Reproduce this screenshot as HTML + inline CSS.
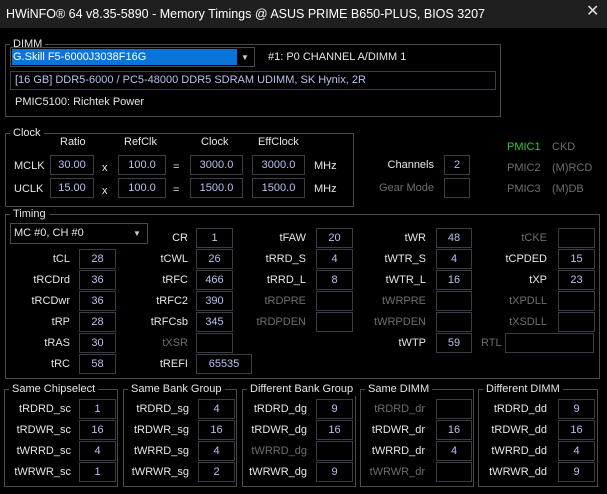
<!DOCTYPE html><html><head><meta charset="utf-8"><style>
*{margin:0;padding:0;box-sizing:border-box}
body{width:607px;height:494px;background:#000;font-family:"Liberation Sans",sans-serif;font-size:11px;color:#e6e6e6;position:relative;overflow:hidden}
.a{position:absolute;white-space:nowrap;line-height:14px}
.g{position:absolute;border:1px solid #4a4a4a}
.gl{position:absolute;background:#000;padding:0 3px;line-height:14px;color:#e6e6e6}
.b{position:absolute;border:1px solid #3c3c48;color:#b8c0f0;text-align:center;line-height:19px;height:20px}
.d{color:#6e6e6e}
.r{text-align:right}
</style></head><body>
<div class="a" style="left:0;top:0;width:607px;height:28px;background:#1f1f1f"></div>
<div class="a" style="left:6px;top:7px;font-size:12.5px;color:#fff">HWiNFO® 64 v8.35-5890 - Memory Timings @ ASUS PRIME B650-PLUS, BIOS 3207</div>
<div class="a" style="left:586px;top:5px;font-size:16px;color:#ddd">✕</div>
<div id="c"></div>
<script>
var h='';
function A(x,y,t,cls,st){h+='<div class="a '+(cls||'')+'" style="left:'+x+'px;top:'+y+'px;'+(st||'')+'">'+t+'</div>';}
function R(xe,y,t,d){h+='<div class="a r'+(d?' d':'')+'" style="right:'+(607-xe)+'px;top:'+(y+3)+'px">'+t+'</div>';}
function B(x1,x2,y,t){h+='<div class="b" style="left:'+x1+'px;top:'+y+'px;width:'+(x2-x1)+'px">'+(t||'')+'</div>';}
function G(x1,y1,x2,y2,l){h+='<div class="g" style="left:'+x1+'px;top:'+y1+'px;width:'+(x2-x1)+'px;height:'+(y2-y1)+'px"></div><div class="gl" style="left:'+(x1+5)+'px;top:'+(y1-7)+'px">'+l+'</div>';}
G(5,44,501,117,'DIMM');
h+='<div class="a" style="left:10px;top:47px;width:245px;height:20px;border:1px solid #4a4a4a"></div>';
h+='<div class="a" style="left:12px;top:49px;width:225px;height:16px;background:#0a74d8;color:#fff;padding-left:1px;line-height:16px">G.Skill F5-6000J3038F16G</div>';
A(241,51,'▼','','font-size:8px;color:#ccc');
A(268,50,'#1: P0 CHANNEL A/DIMM 1');
h+='<div class="a" style="left:10px;top:71px;width:486px;height:19px;border:1px solid #3c3c48;color:#b8c0f0;padding-left:4px;line-height:17px">[16 GB] DDR5-6000 / PC5-48000 DDR5 SDRAM UDIMM, SK Hynix, 2R</div>';
A(15,95,'PMIC5100: Richtek Power');
G(5,133,354,207,'Clock');
A(60,135,'Ratio');A(124,135,'RefClk');A(201,135,'Clock');A(258,135,'EffClock');
[[155,'MCLK','30.00','100.0','3000.0','3000.0'],[178,'UCLK','15.00','100.0','1500.0','1500.0']].forEach(function(r){var y=r[0];
A(14,y+4,r[1]);B(50,94,y,r[2]);A(102,y+6,'x');B(118,166,y,r[3]);A(173,y+5,'=');B(190,243,y,r[4]);B(252,305,y,r[5]);A(314,y+4,'MHz');});
R(434,155,'Channels');B(444,470,155,'2');R(434,178,'Gear Mode',1);B(444,470,178,'');
A(507,140,'PMIC1','','color:#33c933');A(552,140,'CKD','d');
A(507,161,'PMIC2','d');A(552,161,'(M)RCD','d');
A(507,182,'PMIC3','d');A(552,182,'(M)DB','d');
G(5,214,600,379,'Timing');
h+='<div class="a" style="left:10px;top:223px;width:138px;height:21px;border:1px solid #4a4a4a;padding-left:3px;line-height:19px">MC #0, CH #0</div>';
A(133,227,'▼','','font-size:8px;color:#ccc');
var cols=[[70,79,116],[188,196,233],[306,316,353],[426,436,472],[547,558,595]];
var data=[
[null,['CR','1'],['tFAW','20'],['tWR','48'],['tCKE','',1]],
[['tCL','28'],['tCWL','26'],['tRRD_S','4'],['tWTR_S','4'],['tCPDED','15']],
[['tRCDrd','36'],['tRFC','466'],['tRRD_L','8'],['tWTR_L','16'],['tXP','23']],
[['tRCDwr','36'],['tRFC2','390'],['tRDPRE','',1],['tWRPRE','',1],['tXPDLL','',1]],
[['tRP','28'],['tRFCsb','345'],['tRDPDEN','',1],['tWRPDEN','',1],['tXSDLL','',1]],
[['tRAS','30'],['tXSR','',1],null,['tWTP','59'],null],
[['tRC','58'],['tREFI','65535','w'],null,null,null]];
data.forEach(function(row,i){var y=228+i*21;row.forEach(function(c,j){if(!c)return;var k=cols[j];R(k[0],y,c[0],c[2]==1);B(k[1],c[2]=='w'?252:k[2],y,c[1]);});});
A(481,336,'RTL','d');B(505,594,333,'');
var gs=[[4,118,'Same Chipselect','sc'],[123,237,'Same Bank Group','sg'],[242,356,'Different Bank Group','dg'],[360,474,'Same DIMM','dr'],[478,598,'Different DIMM','dd']];
var gv=[['1','16','4','1'],['4','16','4','2'],['9','16','',  '9'],['','16','4',''],['9','16','4','9']];
var gb=[[71,79,116],[189,198,235],[307,316,353],[425,436,472],[547,558,595]];
var nm=['tRDRD_','tRDWR_','tWRRD_','tWRWR_'];
gs.forEach(function(g,i){G(g[0],389,g[1],487,g[2]);nm.forEach(function(n,r){var y=399+r*21;var v=gv[i][r];R(gb[i][0],y,n+g[3],v==='');B(gb[i][1],gb[i][2],y,v);});});
document.getElementById('c').innerHTML=h;
</script>
</body></html>
